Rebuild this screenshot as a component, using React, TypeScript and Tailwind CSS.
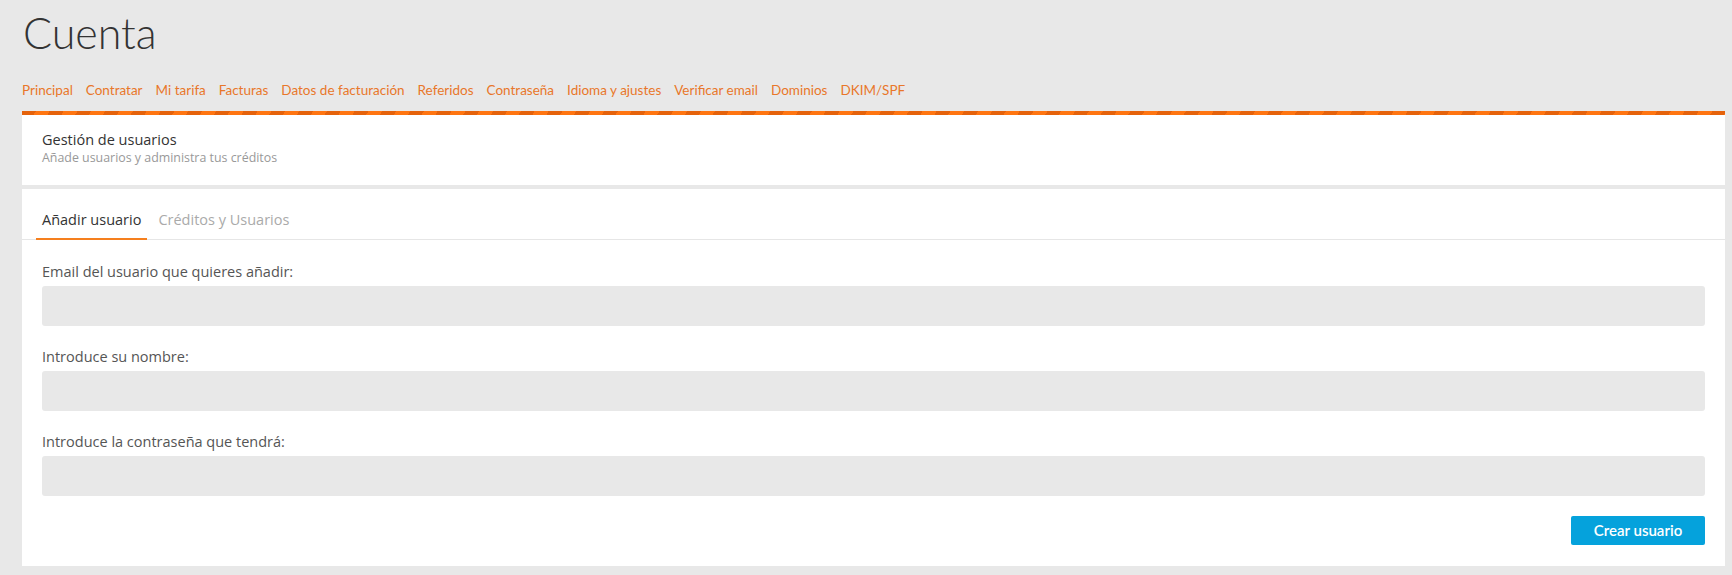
import React from "react";

const navItems = [
  "Principal",
  "Contratar",
  "Mi tarifa",
  "Facturas",
  "Datos de facturación",
  "Referidos",
  "Contraseña",
  "Idioma y ajustes",
  "Verificar email",
  "Dominios",
  "DKIM/SPF",
];

const fields = [
  "Email del usuario que quieres añadir:",
  "Introduce su nombre:",
  "Introduce la contraseña que tendrá:",
];

export default function App() {
  return (
    <div className="w-[1732px] min-h-[575px] bg-[#e8e8e8] pl-[22px] pr-[7px] pt-[11px] pb-[11px] font-['Lato',sans-serif]">
      <h1 className="text-[43px] leading-none font-light text-[#333] pl-[1px]">Cuenta</h1>
      <nav className="mt-[26px] flex gap-[13px] text-[13.5px] leading-[20px] text-[#e8772a]">
        {navItems.map((n) => (
          <a key={n} href="#" className="whitespace-nowrap">
            {n}
          </a>
        ))}
      </nav>
      <div className="mt-[11px] h-[4px] bg-[repeating-linear-gradient(120deg,#e5620b_0px,#e5620b_12px,#ff7511_12px,#ff7511_24px)]" />
      <div className="bg-white h-[70px] px-[20px] pt-[15px] font-['Open_Sans',sans-serif]">
        <div className="text-[14.5px] leading-[20px] text-[#333]">Gestión de usuarios</div>
        <div className="text-[12.4px] leading-[16px] text-[#999]">Añade usuarios y administra tus créditos</div>
      </div>
      <div className="mt-[4px] bg-white pb-[21px] font-['Open_Sans',sans-serif]">
        <div className="flex gap-[5px] px-[14px] pt-[20px] border-b border-[#e6e6e6]">
          <div className="px-[6px] pb-[7px] text-[14.5px] leading-[22px] text-[#333] border-b-2 border-[#f57f1e] -mb-px">
            Añadir usuario
          </div>
          <div className="px-[6px] pb-[7px] text-[14.5px] leading-[22px] text-[#aaa]">Créditos y Usuarios</div>
        </div>
        <div className="px-[20px] pt-[22px]">
          {fields.map((f, i) => (
            <div key={f} className={i > 0 ? "mt-[21px]" : ""}>
              <label className="block text-[14.5px] leading-[20px] text-[#555]">{f}</label>
              <div className="mt-[4px] h-[40px] rounded-[3px] bg-[#e8e8e8]" />
            </div>
          ))}
          <div className="mt-[20px] flex justify-end">
            <button className="h-[29px] w-[134px] rounded-[2px] bg-[#05a2dc] text-white text-[15px] font-semibold font-['Lato',sans-serif]">
              Crear usuario
            </button>
          </div>
        </div>
      </div>
    </div>
  );
}
